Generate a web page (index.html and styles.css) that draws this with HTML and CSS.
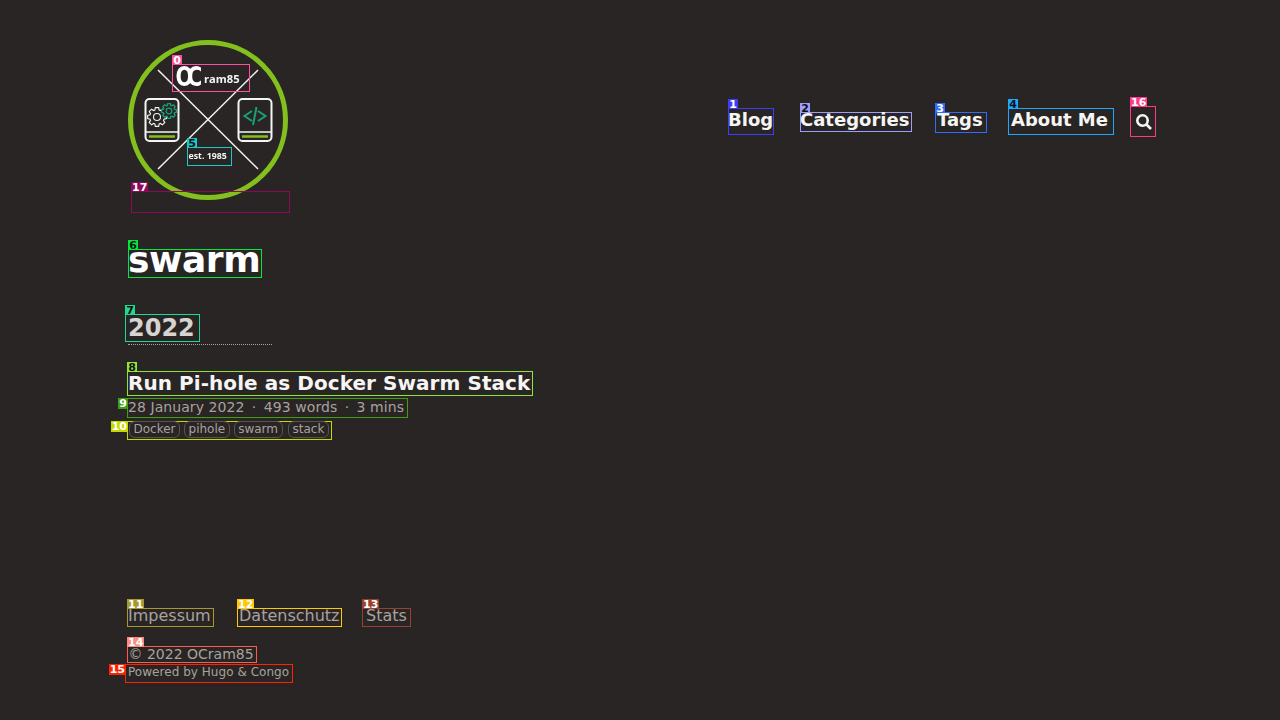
FILE: index.html
```html
<!DOCTYPE html>
<html lang="en">
<head>
<meta charset="utf-8">
<title>swarm</title>
<link rel="stylesheet" href="styles.css">
</head>
<body>
<div class="page">
  <header class="site-header">
    <a class="logo">
      <svg class="logo-img" viewBox="0 0 160 160" width="160" height="160" aria-label="OCram85 logo">
        <defs>
          <polygon id="gear" points=".736,-.225 .985,-.174 .985,.174 .736,.225 .68,.361 .819,.574 .574,.819 .361,.68 .225,.736 .174,.985 -.174,.985 -.225,.736 -.361,.68 -.574,.819 -.819,.574 -.68,.361 -.736,.225 -.985,.174 -.985,-.174 -.736,-.225 -.68,-.361 -.819,-.574 -.574,-.819 -.361,-.68 -.225,-.736 -.174,-.985 .174,-.985 .225,-.736 .361,-.68 .574,-.819 .819,-.574 .68,-.361"/>
        </defs>
        <circle cx="80" cy="80" r="77.5" fill="none" stroke="#82bf1f" stroke-width="5"/>
        <path d="M30 30 130 129M130 30 30 129" stroke="#f2f2f2" stroke-width="1.5" fill="none"/>
        <text class="lg-oc" transform="translate(47.500 46) scale(.8 1)" letter-spacing="-7.800">OC</text>
        <text class="lg-ram" x="76" y="42.500">ram85</text>
        <text class="lg-est" x="60.500" y="118.700">est. 1985</text>
        <g fill="#292524" stroke="#f5f5f5" stroke-width="2">
          <rect x="17.500" y="59" width="33" height="42" rx="4"/>
          <rect x="110.500" y="59" width="33" height="42" rx="4"/>
          <path d="M18 92H50M111 92H143" stroke-width="1.500"/>
        </g>
        <path d="M21 96.500H47M114 96.500H140" stroke="#82bf1f" stroke-width="2.500"/>
        <g fill="#292524" stroke="#f2f2f2">
          <use href="#gear" transform="translate(29 77) scale(9.500)" stroke-width=".12"/>
          <circle cx="29" cy="77" r="3.500" stroke-width="1.100"/>
        </g>
        <g fill="#292524" stroke="#18a078">
          <use href="#gear" transform="translate(41 71) scale(7.500)" stroke-width=".17"/>
          <circle cx="41" cy="71" r="2.800" stroke-width="1.200"/>
        </g>
        <path d="M124 71 116.500 76 124 81M130 71 137.500 76 130 81M128.500 67 125 85" fill="none" stroke="#18a078" stroke-width="2"/>
      </svg>
      <span class="box c0 lb-wordmark"><b class="tag">0</b></span>
      <span class="box c5 lb-est"><b class="tag">5</b></span>
      <span class="box c17 lb-below"><b class="tag">17</b></span>
    </a>
    <nav class="nav">
      <a class="box c1 n-blog"><b class="tag">1</b>Blog</a>
      <a class="box c2 n-cat"><b class="tag">2</b>Categories</a>
      <a class="box c3 n-tags"><b class="tag">3</b>Tags</a>
      <a class="box c4 n-about"><b class="tag">4</b>About Me</a>
      <a class="box c16 n-search"><b class="tag">16</b>
        <svg class="search-icon" viewBox="0 0 18 18" width="18" height="18" aria-label="Search"><circle cx="7.500" cy="7.500" r="5.200"/><path d="M11.500 11.500 16 16"/></svg>
      </a>
    </nav>
  </header>

  <main class="main">
    <h1 class="box c6 title"><b class="tag">6</b>swarm</h1>
    <h2 class="box c7 year"><b class="tag">7</b>2022</h2>
    <hr class="rule">
    <h3 class="box c8 post-title"><b class="tag">8</b>Run Pi-hole as Docker Swarm Stack</h3>
    <div class="box c9 meta"><b class="tag tag-left">9</b>28 January 2022<span class="dot">·</span>493 words<span class="dot">·</span>3 mins</div>
    <div class="box c10 pills"><b class="tag tag-left">10</b><span class="pill">Docker</span><span class="pill">pihole</span><span class="pill">swarm</span><span class="pill">stack</span></div>
  </main>

  <footer class="footer">
    <div class="foot-links">
      <a class="box c11 f-imp"><b class="tag">11</b>Impessum</a>
      <a class="box c12 f-dat"><b class="tag">12</b>Datenschutz</a>
      <a class="box c13 f-stats"><b class="tag">13</b>Stats</a>
    </div>
    <p class="box c14 copy"><b class="tag">14</b>© 2022 OCram85</p>
    <p class="box c15 powered"><b class="tag tag-left">15</b>Powered by Hugo &amp; Congo</p>
  </footer>
</div>
</body>
</html>
```
FILE: styles.css
```css
* { box-sizing: border-box; }
html, body { margin: 0; height: 100%; }
body {
  background: #292524;
  color: #e7e5e4;
  font-family: "DejaVu Sans", sans-serif;
}
.page {
  height: 720px;
  padding: 40px 124px 37px 128px;
  display: flex;
  flex-direction: column;
  overflow: hidden;
}

/* annotation boxes */
.box { position: relative; display: block; border: 1px solid var(--c); margin: 0; }
.tag {
  position: absolute;
  bottom: 100%;
  left: -1px;
  min-width: 10px;
  height: 10px;
  padding: 0 1px;
  background: var(--c);
  color: var(--t, #fff);
  font: bold 11px/11px "DejaVu Sans", sans-serif;
  letter-spacing: 0;
  text-indent: 0;
  text-align: center;
}
.tag-left { bottom: auto; top: -1px; left: auto; right: 100%; height: 11px; line-height: 11px; }
.c0 { --c: #ff4f9e; }
.c1 { --c: #3d3dff; }
.c2 { --c: #9d9dff; --t: #111; }
.c3 { --c: #2b6cff; }
.c4 { --c: #1fa8ff; --t: #111; }
.c5 { --c: #1fc8c8; --t: #111; }
.c6 { --c: #00e83c; --t: #111; }
.c7 { --c: #1ed98f; --t: #111; }
.c8 { --c: #8ee63c; --t: #111; }
.c9 { --c: #3f9f12; }
.c10 { --c: #c6d800; }
.c11 { --c: #a89a2a; }
.c12 { --c: #ffc800; }
.c13 { --c: #9a4030; }
.c14 { --c: #ff5a50; }
.c14 .tag { background: #ff8a80; }
.c15 { --c: #ff2200; }
.c16 { --c: #ff3a8a; }
.c17 { --c: #8c0a5a; }

/* header */
.site-header { display: flex; align-items: flex-start; justify-content: space-between; flex: none; height: 160px; }
.logo { position: relative; display: block; width: 160px; height: 160px; }
.logo-img { display: block; filter: blur(.3px); }
.lg-oc { font: bold 26px "DejaVu Sans", sans-serif; fill: #fff; }
.lg-ram { font: bold 11.200px "Open Sans", sans-serif; fill: #f5f5f5; }
.lg-est { font: bold 8.800px "Open Sans", sans-serif; fill: #f5f5f5; }
.lb-wordmark { position: absolute; left: 44px; top: 24px; width: 78px; height: 28px; }
.lb-est { position: absolute; left: 59px; top: 107px; width: 45px; height: 19px; }
.lb-below { position: absolute; left: 3px; top: 151px; width: 159px; height: 22px; }

.nav { display: flex; align-items: flex-start; margin-top: 66px; font-size: 18px; font-weight: 700; color: #f5f5f4; }
.n-blog { width: 46px; height: 27px; margin: 2px 26px 0 0; line-height: 22px; text-indent: -1px; }
.n-cat { width: 112px; height: 20px; margin: 6px 23px 0 0; line-height: 14px; text-indent: -1px; }
.n-tags { width: 52px; height: 21px; margin: 6px 21px 0 0; line-height: 14px; padding-left: 1px; }
.n-about { width: 106px; height: 27px; margin: 2px 16px 0 0; line-height: 22px; padding-left: 2px; }
.n-search { width: 26px; height: 31px; padding: 6px 0 0 4px; }
.search-icon { display: block; fill: none; stroke: #f5f5f4; stroke-width: 2.600; }

/* main */
.main { display: flex; flex-direction: column; align-items: flex-start; flex: none; }
.title { margin-top: 49px; width: 134px; height: 29px; line-height: 19px; font-size: 36px; font-weight: 700; letter-spacing: -.4px; text-indent: -1px; color: #fff; white-space: nowrap; }
.year { margin: 36px 0 0 -3px; width: 75px; height: 28px; line-height: 27px; font-size: 24px; font-weight: 700; color: #d6d3d1; padding-left: 2px; }
.rule { width: 144px; height: 0; margin: 2px 0 0; border: 0; border-top: 1px dotted #a8a29e; }
.post-title { margin: 26px 0 0 -1px; width: 406px; height: 25px; line-height: 22px; font-size: 20px; font-weight: 700; letter-spacing: .06px; color: #f5f5f4; white-space: nowrap; }
.meta { margin: 2px 0 0 -1px; width: 281px; height: 20px; line-height: 17px; font-size: 14px; letter-spacing: .07px; color: #a8a29e; white-space: nowrap; }
.dot { margin: 0 7.400px; color: #a8a29e; }
.pills { margin: 3px 0 0 -1px; height: 19px; width: 205px; display: flex; gap: 4px; padding-left: 1px; align-items: flex-start; }
.pill { height: 17px; margin-top: -1px; padding: 0 3.500px; font-size: 12px; line-height: 15px; color: #a8a29e; border: 1px solid #57534e; border-radius: 6px; }
.pill:last-child { margin-left: 1.500px; }

/* footer */
.footer { margin-top: auto; display: flex; flex-direction: column; align-items: flex-start; font-size: 14px; color: #a8a29e; }
.foot-links { display: flex; font-size: 16px; margin-left: -1px; }
.foot-links .box { height: 19px; line-height: 13px; }
.f-imp { width: 87px; margin-right: 23px; }
.f-dat { width: 105px; margin-right: 20px; padding-left: 1px; }
.f-stats { width: 49px; padding-left: 3px; }
.copy { margin: 19px 0 0 -1px; width: 130px; height: 17px; line-height: 14px; padding-left: .5px; white-space: nowrap; }
.powered { margin: 1px 0 0 -3px; width: 168px; height: 19px; line-height: 15px; font-size: 12px; letter-spacing: .04px; padding-left: 2px; white-space: nowrap; }
```
